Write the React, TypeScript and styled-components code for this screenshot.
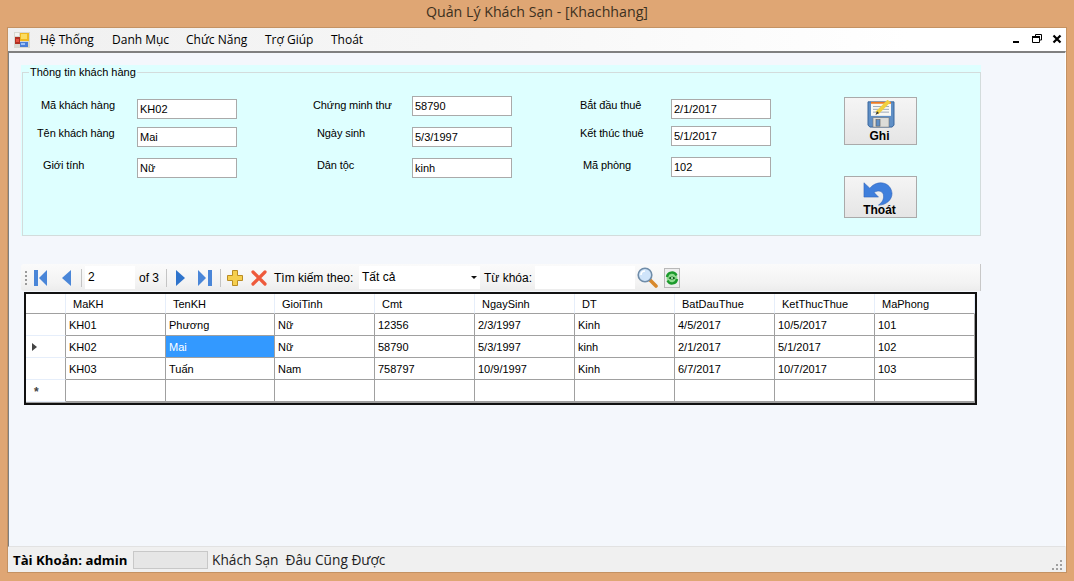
import * as React from 'react'
import styled, { createGlobalStyle } from 'styled-components'

const GlobalStyle = createGlobalStyle`
  html, body {
    margin: 0;
    padding: 0;
    background: #dfa674;
  }
  * {
    box-sizing: border-box;
  }
`

const columns = ['MaKH', 'TenKH', 'GioiTinh', 'Cmt', 'NgaySinh', 'DT', 'BatDauThue', 'KetThucThue', 'MaPhong']
const rows = [
  ['KH01', 'Phương', 'Nữ', '12356', '2/3/1997', 'Kinh', '4/5/2017', '10/5/2017', '101'],
  ['KH02', 'Mai', 'Nữ', '58790', '5/3/1997', 'kinh', '2/1/2017', '5/1/2017', '102'],
  ['KH03', 'Tuấn', 'Nam', '758797', '10/9/1997', 'Kinh', '6/7/2017', '10/7/2017', '103'],
  ['', '', '', '', '', '', '', '', ''],
]

const formRows = [
  [
    { label: 'Mã khách hàng', value: 'KH02', indent: 18, inputTop: 3 },
    { label: 'Chứng minh thư', value: '58790', indent: 76, inputTop: 0 },
    { label: 'Bắt đầu thuê', value: '2/1/2017', indent: 68, inputTop: 3 },
  ],
  [
    { label: 'Tên khách hàng', value: 'Mai', indent: 14, inputTop: 1 },
    { label: 'Ngày sinh', value: '5/3/1997', indent: 80, inputTop: 1 },
    { label: 'Kết thúc thuê', value: '5/1/2017', indent: 68, inputTop: 0 },
  ],
  [
    { label: 'Giới tính', value: 'Nữ', indent: 20, inputTop: 1 },
    { label: 'Dân tộc', value: 'kinh', indent: 80, inputTop: 1 },
    { label: 'Mã phòng', value: '102', indent: 71, inputTop: 0 },
  ],
]

const AppIcon = () => (
  <svg width="16" height="16" viewBox="0 0 16 16">
    <rect x="0" y="0" width="16" height="16" fill="#d8d8d0" />
    <rect x="1" y="1" width="4" height="3" fill="#f4f4f0" />
    <rect x="1" y="5" width="5" height="7" fill="#b03020" />
    <rect x="2" y="7" width="3" height="3" fill="#e85040" />
    <rect x="6" y="1" width="9" height="8" fill="#f0b820" />
    <rect x="7" y="2" width="6" height="5" fill="#fbdc60" />
    <rect x="6" y="10" width="8" height="5" fill="#4a7ed8" />
    <rect x="7" y="11" width="4" height="2" fill="#9cc0f4" />
  </svg>
)

const FirstIcon = () => (
  <svg width="14" height="16" viewBox="0 0 14 16">
    <rect x="0" y="0" width="4" height="16" fill="#4a86d8" />
    <path d="M13 0 L13 16 L5 8 Z" fill="#4a86d8" />
  </svg>
)
const PrevIcon = () => (
  <svg width="9" height="16" viewBox="0 0 9 16">
    <path d="M9 0 L9 16 L0 8 Z" fill="#4a86d8" />
  </svg>
)
const NextIcon = () => (
  <svg width="9" height="16" viewBox="0 0 9 16">
    <path d="M0 0 L0 16 L9 8 Z" fill="#2f74cc" />
  </svg>
)
const LastIcon = () => (
  <svg width="14" height="16" viewBox="0 0 14 16">
    <path d="M0 0 L0 16 L8 8 Z" fill="#4a86d8" />
    <rect x="10" y="0" width="4" height="16" fill="#4a86d8" />
  </svg>
)
const PlusIcon = () => (
  <svg width="16" height="16" viewBox="0 0 16 16">
    <path d="M5.500 .5 H10.500 V5.500 H15.500 V10.500 H10.500 V15.500 H5.500 V10.500 H.5 V5.500 H5.500 Z" fill="#f6cf4e" stroke="#b98c24" />
  </svg>
)
const DeleteIcon = () => (
  <svg width="16" height="16" viewBox="0 0 16 16">
    <path d="M2 2 L14 14 M14 2 L2 14" stroke="#ee5a3c" strokeWidth="3.2" strokeLinecap="round" />
  </svg>
)
const SearchIcon = () => (
  <svg width="21" height="21" viewBox="0 0 21 21">
    <path d="M13 13 L19 19" stroke="#d8892c" strokeWidth="3.6" strokeLinecap="round" />
    <circle cx="8" cy="8" r="6.8" fill="#cfe4fa" stroke="#6f8ca8" strokeWidth="1.6" />
    <path d="M4 8 A4 4 0 0 1 8 4" stroke="#fff" strokeWidth="1.6" fill="none" />
  </svg>
)
const RefreshIcon = () => (
  <svg width="16" height="20" viewBox="0 0 16 20">
    <rect x=".5" y=".5" width="15" height="19" fill="#eeeeee" stroke="#b8b8b8" />
    <circle cx="8" cy="10" r="5.500" fill="#8fdc8f" />
    <path d="M3 9 A5 5 0 0 1 12.500 7.500 M13 11 A5 5 0 0 1 3.500 12.500" fill="none" stroke="#1c9a2c" strokeWidth="2.400" />
    <path d="M4.500 10 Q8 7 11.500 10 Q8 13 4.500 10 Z" fill="#0f5e1c" />
    <circle cx="8" cy="10" r="1" fill="#c8f4c8" />
  </svg>
)
const SaveIcon = () => (
  <svg width="28" height="28" viewBox="0 0 28 30" preserveAspectRatio="none">
    <path d="M1 2 H27 V27 L25 29 H3 L1 27 Z" fill="#5f8fc6" stroke="#37659c" />
    <rect x="4" y="2" width="20" height="15" fill="#f8f8f4" />
    <rect x="4" y="2" width="20" height="2" fill="#ee7a22" />
    <path d="M6 7 H22 M6 10 H22 M6 13 H22" stroke="#9aa6b4" />
    <rect x="6" y="19" width="16" height="10" fill="#dcdcd8" stroke="#777" strokeWidth=".6" />
    <rect x="9" y="21" width="4" height="7" fill="#5f8fc6" stroke="#555" strokeWidth=".6" />
    <path d="M10 14 L22 1" stroke="#f0d040" strokeWidth="4" />
    <path d="M8.500 16 L10 12 L12 14 Z" fill="#333" />
  </svg>
)
const UndoIcon = () => (
  <svg width="30" height="25" viewBox="0 0 31 28" preserveAspectRatio="none">
    <path
      d="M1 2 L1 18 L16 18 L11.500 13 C15 10 20 11 21 15 C22 20 20 24 16 27 C24 27 30 21 30 14 C29 1 15 -2 7 8 Z"
      fill="#3f7fdc"
      stroke="#2f62b8"
      strokeWidth=".6"
    />
  </svg>
)

export default function App() {
  return (
    <>
      <GlobalStyle />
      <Frame>
        <TitleBar>Quản Lý Khách Sạn - [Khachhang]</TitleBar>
        <Client>
          <MenuBar>
            <MenuIcon>
              <AppIcon />
            </MenuIcon>
            <MenuItem $width={72}>Hệ Thống</MenuItem>
            <MenuItem $width={74}>Danh Mục</MenuItem>
            <MenuItem $width={79}>Chức Năng</MenuItem>
            <MenuItem $width={66}>Trợ Giúp</MenuItem>
            <MenuItem $width={60}>Thoát</MenuItem>
            <WindowControls>
              <svg width="60" height="14" viewBox="0 0 60 14">
                <rect x="7" y="8" width="6" height="2" fill="#000" />
                <path d="M26.500 4.500 H33.500 V9.500 H26.500 Z M29.500 4 V1.500 H35.500 V7 H34" fill="none" stroke="#000" />
                <rect x="26" y="3" width="8" height="2" fill="#000" />
                <path d="M47.500 2.500 L54.500 9.500 M54.500 2.500 L47.500 9.500" stroke="#000" strokeWidth="2.200" />
              </svg>
            </WindowControls>
          </MenuBar>
          <Content>
            <InfoPanel>
              <GroupBox>
                <GroupLegend>Thông tin khách hàng</GroupLegend>
                <GroupBody>
                  <FieldRows>
                    {formRows.map((row, i) => (
                      <FieldRow key={i} $top={i === 0 ? 17 : 0} $height={i === 2 ? 21 : 30} $gap={i === 2 ? 1 : 0}>
                        {row.map((f) => (
                          <Field key={f.label}>
                            <FieldLabel $indent={f.indent} $top={i === 0 ? 2 : i === 2 ? 1 : 0}>
                              {f.label}
                            </FieldLabel>
                            <FieldInput $top={f.inputTop} readOnly value={f.value} />
                          </Field>
                        ))}
                      </FieldRow>
                    ))}
                  </FieldRows>
                  <ActionColumn>
                    <ActionButton $height={48} $pad={2} $textTop={2} $iconShift={0}>
                      <SaveIcon />
                      <span>Ghi</span>
                    </ActionButton>
                    <ActionButton $height={42} $pad={4} $textTop={-2} $iconShift={5}>
                      <UndoIcon />
                      <span>Thoát</span>
                    </ActionButton>
                  </ActionColumn>
                </GroupBody>
              </GroupBox>
            </InfoPanel>

            <Toolbar>
              <Gripper />
              <ToolIcon $left={7}>
                <FirstIcon />
              </ToolIcon>
              <ToolIcon $left={14}>
                <PrevIcon />
              </ToolIcon>
              <ToolSeparator $left={10} />
              <ToolField $left={3} $width={50}>
                2
              </ToolField>
              <ToolLabel $left={4} $width={20}>
                of 3
              </ToolLabel>
              <ToolSeparator $left={7} />
              <ToolIcon $left={9}>
                <NextIcon />
              </ToolIcon>
              <ToolIcon $left={13}>
                <LastIcon />
              </ToolIcon>
              <ToolSeparator $left={8} />
              <ToolIcon $left={6}>
                <PlusIcon />
              </ToolIcon>
              <ToolIcon $left={8}>
                <DeleteIcon />
              </ToolIcon>
              <ToolLabel $left={7} $width={80}>
                Tìm kiếm theo:
              </ToolLabel>
              <ToolField $left={5} $width={121}>
                Tất cả
                <ComboArrow />
              </ToolField>
              <ToolLabel $left={4} $width={47}>
                Từ khóa:
              </ToolLabel>
              <ToolField $left={4} $width={100} />
              <ToolIcon $left={2}>
                <SearchIcon />
              </ToolIcon>
              <ToolIcon $left={6}>
                <RefreshIcon />
              </ToolIcon>
            </Toolbar>

            <DataGrid>
              <HeaderCorner />
              {columns.map((c) => (
                <HeaderCell key={c}>{c}</HeaderCell>
              ))}
              {rows.map((row, i) => (
                <React.Fragment key={i}>
                  <RowHeader>
                    {i === 1 && <CurrentMark />}
                    {i === 3 && <NewMark>*</NewMark>}
                  </RowHeader>
                  {row.map((v, j) => (
                    <DataCell key={j} $selected={i === 1 && j === 1}>
                      {v}
                    </DataCell>
                  ))}
                </React.Fragment>
              ))}
            </DataGrid>
          </Content>
          <StatusBar>
            <StatusUser>Tài Khoản: admin</StatusUser>
            <StatusBox />
            <StatusText>Khách Sạn&nbsp; Đâu Cũng Được</StatusText>
            <ResizeGrip>
              <svg width="12" height="12" viewBox="0 0 12 12" fill="#a0a0a0">
                <rect x="8" y="0" width="2" height="2" />
                <rect x="4" y="4" width="2" height="2" />
                <rect x="8" y="4" width="2" height="2" />
                <rect x="0" y="8" width="2" height="2" />
                <rect x="4" y="8" width="2" height="2" />
                <rect x="8" y="8" width="2" height="2" />
              </svg>
            </ResizeGrip>
          </StatusBar>
        </Client>
      </Frame>
    </>
  )
}

const UI_FONT = `'Liberation Sans', Arial, sans-serif`
const MENU_FONT = `'Open Sans', 'Noto Sans', sans-serif`

const Frame = styled.div`
  width: 1074px;
  height: 581px;
  background: #dfa674;
  padding: 0 7px 8px;
  display: flex;
  flex-direction: column;
  overflow: hidden;
  font-family: ${UI_FONT};
  font-size: 11px;
  color: #000;
`
const TitleBar = styled.div`
  height: 27px;
  line-height: 24px;
  text-align: center;
  font-family: ${MENU_FONT};
  font-size: 14.2px;
  color: #3c3020;
  flex: none;
`
const Client = styled.div`
  flex: 1;
  display: flex;
  flex-direction: column;
  border: 1px solid #c49263;
  min-height: 0;
`
const MenuBar = styled.div`
  height: 23px;
  flex: none;
  display: flex;
  align-items: center;
  padding-left: 6px;
  background: linear-gradient(90deg, #f0f0f0 0%, #f6f6f6 40%, #ffffff 85%);
  font-family: ${MENU_FONT};
  font-size: 12px;
`
const MenuIcon = styled.div`
  width: 16px;
  height: 16px;
  margin-right: 10px;
  display: flex;
`
const MenuItem = styled.div<{ $width: number }>`
  width: ${({ $width }) => $width}px;
  white-space: nowrap;
`
const WindowControls = styled.div`
  margin-left: auto;
  display: flex;
`
const Content = styled.div`
  flex: 1;
  min-height: 0;
  background: #f4f7fc;
  border-top: 2px solid #808080;
  border-left: 1px solid #808080;
  border-right: 1px solid #ffffff;
  border-bottom: 1px solid #e2e2e2;
  padding: 12px 0 0 12px;
`
const InfoPanel = styled.div`
  width: 960px;
  height: 171px;
  background: #deffff;
  padding-left: 1px;
`
const GroupBox = styled.fieldset`
  margin: 0;
  padding: 0;
  height: 171px;
  border: 1px solid #d3dcdc;
  min-width: 0;
`
const GroupLegend = styled.legend`
  margin-left: 6px;
  padding: 0 1px;
  font-size: 11px;
  line-height: 14px;
`
const GroupBody = styled.div`
  display: flex;
`
const FieldRows = styled.div`
  display: flex;
  flex-direction: column;
`
const FieldRow = styled.div<{ $top: number; $height: number; $gap: number }>`
  display: grid;
  grid-template-columns: 214px 275px 259px;
  margin-top: ${({ $top }) => $top}px;
  height: ${({ $height }) => $height}px;
  padding-top: ${({ $gap }) => $gap}px;
`
const Field = styled.div`
  display: flex;
  justify-content: space-between;
  align-items: flex-start;
`
const FieldLabel = styled.div<{ $indent: number; $top: number }>`
  padding-left: ${({ $indent }) => $indent}px;
  margin-top: ${({ $top }) => $top}px;
  line-height: 14px;
  letter-spacing: -0.1px;
  white-space: nowrap;
`
const FieldInput = styled.input<{ $top: number }>`
  width: 100px;
  height: 20px;
  flex: none;
  margin: ${({ $top }) => $top}px 0 0;
  padding: 0 3px 0 2px;
  border: 1px solid #aaaaaa;
  border-radius: 0;
  outline: none;
  background: #fff;
  font-family: ${UI_FONT};
  font-size: 11px;
  color: #000;
`
const ActionColumn = styled.div`
  margin: 18px 0 0 73px;
  display: flex;
  flex-direction: column;
  gap: 31px;
`
const ActionButton = styled.div<{ $height: number; $pad: number; $textTop: number; $iconShift: number }>`
  width: 73px;
  height: ${({ $height }) => $height}px;
  border: 1px solid #aaaaaa;
  background: linear-gradient(180deg, #f5f5f5, #e5e5e5);
  display: flex;
  flex-direction: column;
  align-items: center;
  padding-top: ${({ $pad }) => $pad}px;
  svg {
    flex: none;
    margin-right: ${({ $iconShift }) => $iconShift}px;
  }
  span {
    margin: ${({ $textTop }) => $textTop}px 2px 0 0;
    font-weight: bold;
    font-size: 12px;
    line-height: 13px;
  }
`
const Toolbar = styled.div`
  width: 960px;
  height: 27px;
  margin-top: 28px;
  display: flex;
  align-items: center;
  padding-left: 4px;
  font-size: 12px;
  background: linear-gradient(180deg, #fbfbfb, #f3f3f3 70%, #ececec);
  border-right: 1px solid #c8c8c8;
  border-radius: 3px 0 0 3px;
`
const Gripper = styled.div`
  width: 2px;
  height: 14px;
  flex: none;
  background: repeating-linear-gradient(180deg, #9a9a9a 0 2px, transparent 2px 4px);
`
const ToolIcon = styled.div<{ $left: number }>`
  margin-left: ${({ $left }) => $left}px;
  display: flex;
  flex: none;
`
const ToolSeparator = styled.div<{ $left: number }>`
  width: 1px;
  height: 18px;
  flex: none;
  margin-left: ${({ $left }) => $left}px;
  background: #c4c4c4;
`
const ToolField = styled.div<{ $left: number; $width: number }>`
  position: relative;
  width: ${({ $width }) => $width}px;
  height: 23px;
  flex: none;
  margin-left: ${({ $left }) => $left}px;
  padding-left: 3px;
  line-height: 23px;
  background: #fff;
`
const ComboArrow = styled.div`
  position: absolute;
  right: 3px;
  top: 10px;
  border: 3px solid transparent;
  border-top: 3px solid #111;
  border-bottom: 0;
`
const ToolLabel = styled.div<{ $left: number; $width: number }>`
  margin-left: ${({ $left }) => $left}px;
  width: ${({ $width }) => $width}px;
  white-space: nowrap;
  flex: none;
`
const DataGrid = styled.div`
  width: 953px;
  margin: 1px 0 0 3px;
  display: grid;
  grid-template-columns: 40px 100px 109px repeat(7, 100px);
  grid-template-rows: 20px repeat(4, 22px);
  border: 2px solid #111;
  padding-bottom: 1px;
  background: #a0a0a0;
`
const HeaderCorner = styled.div`
  background: #fff;
  border-right: 1px solid #e6eefa;
  border-bottom: 1px solid #a0a0a0;
`
const HeaderCell = styled.div`
  padding-left: 7px;
  line-height: 21px;
  background: #fff;
  border-right: 1px solid #e6eefa;
  border-bottom: 1px solid #a0a0a0;
`
const RowHeader = styled.div`
  position: relative;
  background: #fff;
  border-right: 1px solid #a0a0a0;
  border-bottom: 1px solid #e6eefa;
`
const CurrentMark = styled.div`
  position: absolute;
  left: 6px;
  top: 7px;
  border: 4.5px solid transparent;
  border-left: 5px solid #444;
  border-right: 0;
`
const NewMark = styled.div`
  position: absolute;
  left: 8px;
  top: 6px;
  font-size: 12px;
  line-height: 12px;
  font-weight: bold;
  color: #444;
`
const DataCell = styled.div<{ $selected: boolean }>`
  padding-left: 3px;
  line-height: 23px;
  white-space: nowrap;
  background: ${({ $selected }) => ($selected ? '#3399ff' : '#fff')};
  color: ${({ $selected }) => ($selected ? '#fff' : '#000')};
  border-right: 1px solid #a0a0a0;
  border-bottom: 1px solid #a0a0a0;
`
const StatusBar = styled.div`
  height: 25px;
  flex: none;
  display: flex;
  align-items: center;
  padding-left: 5px;
  background: #f0f0f0;
  position: relative;
`
const StatusUser = styled.div`
  width: 120px;
  font-family: ${MENU_FONT};
  font-weight: bold;
  font-size: 13.2px;
  white-space: nowrap;
`
const StatusBox = styled.div`
  width: 75px;
  height: 18px;
  background: #e6e6e6;
  border: 1px solid #c8c8c8;
`
const StatusText = styled.div`
  margin-left: 4px;
  font-family: ${MENU_FONT};
  font-size: 13.7px;
  white-space: nowrap;
  color: #222;
`
const ResizeGrip = styled.div`
  position: absolute;
  right: 2px;
  bottom: 0;
  display: flex;
`
